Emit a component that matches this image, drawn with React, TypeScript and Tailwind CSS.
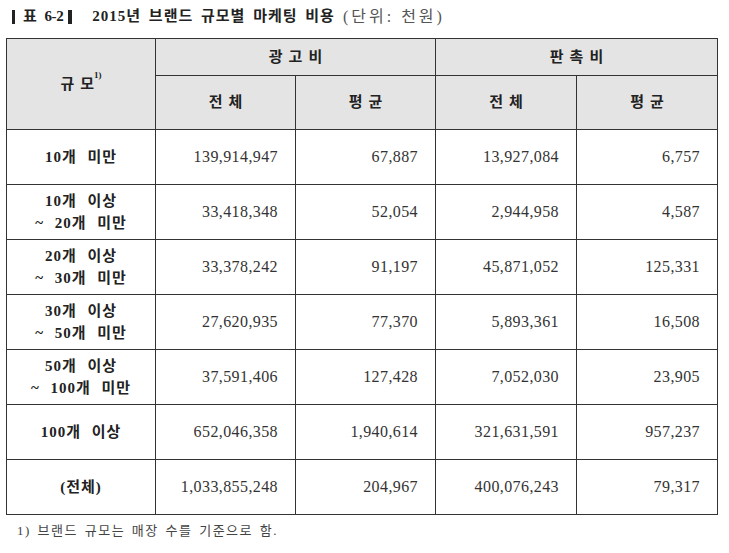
const rows = [
  { label: ["10개 미만"], v: ["139,914,947", "67,887", "13,927,084", "6,757"] },
  { label: ["10개 이상", "~ 20개 미만"], v: ["33,418,348", "52,054", "2,944,958", "4,587"] },
  { label: ["20개 이상", "~ 30개 미만"], v: ["33,378,242", "91,197", "45,871,052", "125,331"] },
  { label: ["30개 이상", "~ 50개 미만"], v: ["27,620,935", "77,370", "5,893,361", "16,508"] },
  { label: ["50개 이상", "~ 100개 미만"], v: ["37,591,406", "127,428", "7,052,030", "23,905"] },
  { label: ["100개 이상"], v: ["652,046,358", "1,940,614", "321,631,591", "957,237"] },
  { label: ["(전체)"], v: ["1,033,855,248", "204,967", "400,076,243", "79,317"] },
];

const font = { fontFamily: '"Liberation Serif", "Noto Sans CJK KR", serif' };

export default function App() {
  return (
    <div className="w-[729px] h-[553px] bg-white text-[#222] overflow-hidden" style={font}>
      <div className="flex items-center pt-[5px] pl-[12px] h-[28px] text-[15px] font-bold tracking-tight">
        <span className="inline-block w-[3px] h-[14px] bg-[#222]" />
        <span className="ml-[8px]">표</span>
        <span className="ml-[8px]">6-2</span>
        <span className="inline-block w-[4px] h-[14px] bg-[#222] ml-[5px]" />
        <span className="ml-[20px] tracking-[1px] [word-spacing:3px]">2015년 브랜드 규모별 마케팅 비용</span>
        <span className="font-normal ml-[8px] text-[#555] text-[16px] tracking-[3px]">(단위: 천원)</span>
      </div>
      <table className="ml-[6px] mt-[10px] border-collapse table-fixed w-[711px] text-[15px]">
        <colgroup>
          <col className="w-[149px]" />
          <col className="w-[140px]" />
          <col className="w-[140px]" />
          <col className="w-[141px]" />
          <col className="w-[141px]" />
        </colgroup>
        <thead className="bg-[#e4e4e4] font-bold tracking-[6px]">
          <tr className="h-[37px]">
            <th rowSpan={2} className="border-[1.5px] border-[#333]">
              규<span className="tracking-normal">모</span>
              <sup className="text-[9px] align-super tracking-normal">1)</sup>
            </th>
            <th colSpan={2} className="border-[1.5px] border-[#333] pl-[6px]">광고비</th>
            <th colSpan={2} className="border-[1.5px] border-[#333] pl-[6px]">판촉비</th>
          </tr>
          <tr className="h-[54px]">
            <th className="border-[1.5px] border-[#333] pl-[6px]">전체</th>
            <th className="border-[1.5px] border-[#333] pl-[6px]">평균</th>
            <th className="border-[1.5px] border-[#333] pl-[6px]">전체</th>
            <th className="border-[1.5px] border-[#333] pl-[6px]">평균</th>
          </tr>
        </thead>
        <tbody>
          {rows.map((r) => (
            <tr key={r.label.join()} className="h-[55px]">
              <td className="border-[1.5px] border-[#333] text-center font-bold leading-[22px] tracking-[1px] [word-spacing:6px]">
                {r.label.map((l) => (
                  <div key={l}>{l}</div>
                ))}
              </td>
              {r.v.map((n, i) => (
                <td
                  key={i}
                  className="border-[1.5px] border-[#333] text-right pr-[17px] text-[#333] text-[16px] tracking-[0.4px]"
                >
                  {n}
                </td>
              ))}
            </tr>
          ))}
        </tbody>
      </table>
      <div className="pl-[17px] pt-[6px] text-[13px] text-[#444] tracking-[1.5px] [word-spacing:2px]">
        1) 브랜드 규모는 매장 수를 기준으로 함.
      </div>
    </div>
  );
}
